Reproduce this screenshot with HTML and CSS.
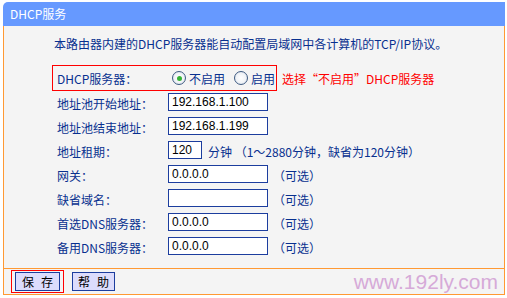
FILE: index.html
```
<!DOCTYPE html>
<html lang="zh-CN">
<head>
<meta charset="utf-8">
<title>DHCP服务</title>
<link rel="stylesheet" href="styles.css">
</head>
<body>
<div class="panel">
  <div class="title">DHCP服务</div>
  <div class="content">
    <p class="intro">本路由器内建的DHCP服务器能自动配置局域网中各计算机的TCP/IP协议。</p>
    <div class="form">
      <div class="row-dhcp">
        <div class="boxed">
          <span class="label">DHCP服务器：</span>
          <span class="radios">
            <span class="opt"><span class="radio on"></span>不启用</span>
            <span class="opt"><span class="radio"></span>启用</span>
          </span>
        </div>
        <span class="note">选择“不启用”DHCP服务器</span>
      </div>
      <div class="row"><span class="label">地址池开始地址：</span><span class="field">192.168.1.100</span></div>
      <div class="row"><span class="label">地址池结束地址：</span><span class="field">192.168.1.199</span></div>
      <div class="row"><span class="label">地址租期：</span><span class="field short">120</span><span class="hint">分钟 （1～2880分钟，缺省为120分钟）</span></div>
      <div class="row"><span class="label">网关：</span><span class="field">0.0.0.0</span><span class="opt-text">（可选）</span></div>
      <div class="row"><span class="label">缺省域名：</span><span class="field"></span><span class="opt-text">（可选）</span></div>
      <div class="row"><span class="label">首选DNS服务器：</span><span class="field">0.0.0.0</span><span class="opt-text">（可选）</span></div>
      <div class="row"><span class="label">备用DNS服务器：</span><span class="field">0.0.0.0</span><span class="opt-text">（可选）</span></div>
    </div>
  </div>
  <div class="footer">
    <span class="btn-mark"><span class="btn save"><span>保</span><span>存</span></span></span>
    <span class="btn help"><span>帮</span><span>助</span></span>
    <span class="watermark">www.192ly.com</span>
  </div>
</div>
</body>
</html>
```

FILE: styles.css
```
* { box-sizing: border-box; }
html, body { margin: 0; padding: 0; background: #ffffff; }
body {
  font-family: "Noto Sans CJK SC", "Noto Sans", sans-serif;
  font-size: 12px;
  color: #08308f;
  width: 507px;
  height: 298px;
  overflow: hidden;
  padding: 2px 0 0 3px;
}
.panel { width: 502px; }
.title {
  height: 24px;
  background: #6699ff;
  color: #ffffff;
  border-top-left-radius: 5px;
  padding-left: 7px;
  display: flex;
  align-items: center;
  line-height: 12px;
}
.content {
  background: #f4f4f4;
  border-left: 1px solid #ff9933;
  border-right: 1px solid #ff9933;
  padding: 9px 0 9px 48px;
}
.intro {
  margin: 0 0 12px 0;
  padding-left: 2px;
  line-height: 18px;
  height: 18px;
  white-space: nowrap;
}
.form { display: flex; flex-direction: column; }
.row-dhcp { display: flex; align-items: center; height: 26px; }
.boxed {
  width: 225px;
  height: 26px;
  border: 1px solid #ff0000;
  padding-left: 4px;
  display: flex;
  align-items: center;
}
.label { width: 111px; flex: none; white-space: nowrap; }
.radios { display: flex; align-items: center; margin-left: 4px; gap: 9px; }
.opt { display: flex; align-items: center; gap: 3px; white-space: nowrap; }
.radio {
  width: 14px;
  height: 14px;
  border-radius: 50%;
  border: 1px solid #3f5b82;
  background: radial-gradient(circle at 50% 50%, #ffffff 0%, #f0f3f7 55%, #c9d3df 100%);
  display: flex;
  align-items: center;
  justify-content: center;
}
.radio.on::after {
  content: "";
  width: 5px;
  height: 5px;
  border-radius: 50%;
  background: #35b335;
}
.note { color: #ff0000; margin-left: 5px; white-space: nowrap; }
.row {
  display: flex;
  align-items: center;
  height: 24px;
  padding-left: 5px;
}
.field {
  width: 100px;
  height: 18px;
  margin-top: 2px;
  align-self: flex-start;
  background: #ffffff;
  border: 1px solid #1c3d9e;
  font-family: "Liberation Sans", Arial, sans-serif;
  font-size: 12px;
  color: #000000;
  padding-left: 3px;
  line-height: 16px;
  white-space: nowrap;
  flex: none;
}
.field.short { width: 34px; }
.hint { margin-left: 6px; white-space: nowrap; }
.opt-text { margin-left: 5px; white-space: nowrap; }
.footer {
  background: #f4f4f4;
  border: 1px solid #ff9933;
  height: 27px;
  padding: 1px 6px 0 7px;
  display: flex;
  align-items: flex-start;
}
.btn-mark {
  border: 1px solid #ff0000;
  padding: 1px 3px;
  display: flex;
}
.btn {
  width: 45px;
  height: 19px;
  background: #dcdcfc;
  border: 1px solid #1c3d9e;
  color: #000000;
  display: flex;
  align-items: center;
  justify-content: center;
  gap: 7px;
  line-height: 12px;
}
.help { width: 43px; margin-left: 8px; margin-top: 2px; }
.watermark {
  margin-left: auto;
  font-family: "Liberation Sans", Arial, sans-serif;
  font-size: 21px;
  line-height: 24px;
  color: #d6aad8;
  white-space: nowrap;
}
```
